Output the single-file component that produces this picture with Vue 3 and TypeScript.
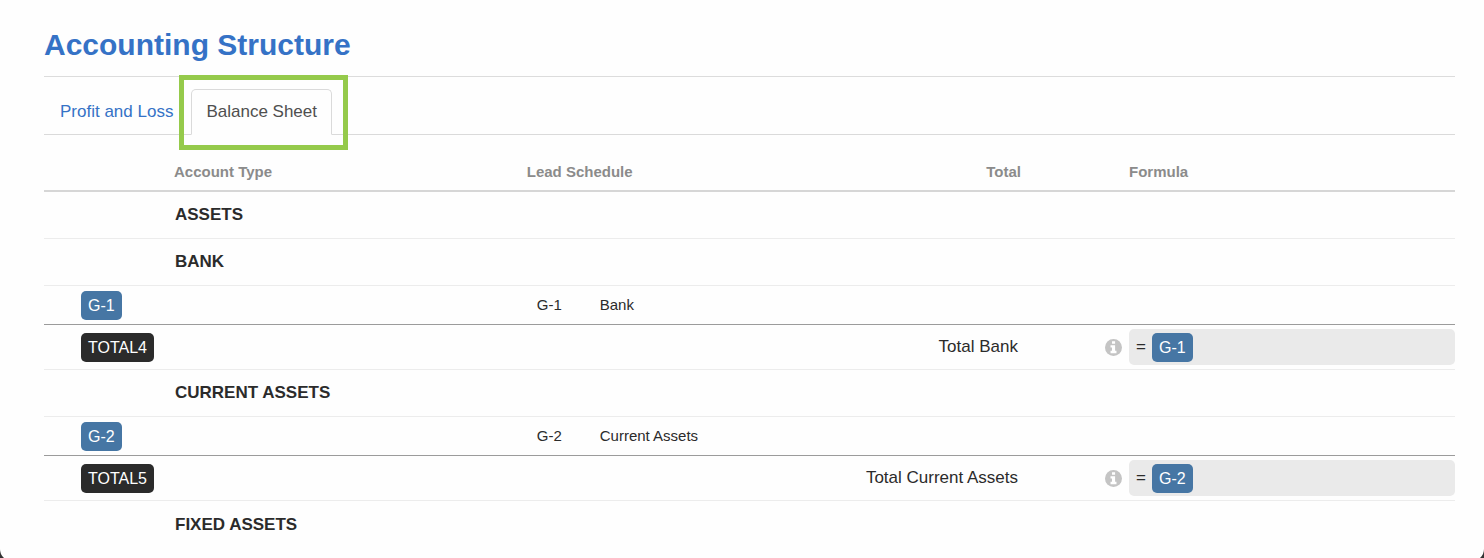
<script setup lang="ts">
import { ref } from 'vue'

interface SectionRow { kind: 'section'; title: string }
interface AccountRow { kind: 'account'; code: string; name: string }
interface TotalRow { kind: 'total'; code: string; label: string; formula: string[] }
type Row = SectionRow | AccountRow | TotalRow

const tabs: string[] = ['Profit and Loss', 'Balance Sheet']
const activeTab = ref<string>('Balance Sheet')

const rows: Row[] = [
  { kind: 'section', title: 'ASSETS' },
  { kind: 'section', title: 'BANK' },
  { kind: 'account', code: 'G-1', name: 'Bank' },
  { kind: 'total', code: 'TOTAL4', label: 'Total Bank', formula: ['G-1'] },
  { kind: 'section', title: 'CURRENT ASSETS' },
  { kind: 'account', code: 'G-2', name: 'Current Assets' },
  { kind: 'total', code: 'TOTAL5', label: 'Total Current Assets', formula: ['G-2'] },
  { kind: 'section', title: 'FIXED ASSETS' },
]
</script>

<template>
  <div class="window">
    <main class="page">
      <h1 class="title">Accounting Structure</h1>

      <nav class="tabs">
        <a
          v-for="tab in tabs"
          :key="tab"
          href="#"
          class="tab"
          :class="{ active: tab === activeTab }"
          @click.prevent="activeTab = tab"
        >{{ tab }}<span v-if="tab === activeTab" class="highlight"></span></a>
      </nav>

      <table class="structure">
        <colgroup>
          <col class="col-code" />
          <col class="col-type" />
          <col />
          <col />
          <col class="col-info" />
          <col class="col-formula" />
        </colgroup>
        <thead>
          <tr>
            <th></th>
            <th>Account Type</th>
            <th>Lead Schedule</th>
            <th class="right">Total</th>
            <th></th>
            <th>Formula</th>
          </tr>
        </thead>
        <tbody>
          <tr v-for="(row, i) in rows" :key="i" :class="row.kind">
            <template v-if="row.kind === 'section'">
              <td></td>
              <td class="heading" colspan="5">{{ row.title }}</td>
            </template>
            <template v-else-if="row.kind === 'account'">
              <td class="code"><span class="badge blue">{{ row.code }}</span></td>
              <td></td>
              <td colspan="4">
                <div class="lead"><span class="lead-code">{{ row.code }}</span><span>{{ row.name }}</span></div>
              </td>
            </template>
            <template v-else>
              <td class="code"><span class="badge dark">{{ row.code }}</span></td>
              <td></td>
              <td class="total-label" colspan="2">{{ row.label }}</td>
              <td class="info-cell">
                <button type="button" class="info" :aria-label="`About ${row.label}`">
                  <svg viewBox="0 0 16 16" width="17" height="17" aria-hidden="true">
                    <circle cx="8" cy="8" r="8" fill="#c4c4c4" />
                    <path d="M6.6 2.2h2.9v2.3H6.6zM5.2 5.8h4.3v5.3h1.3v2.2H5.2v-2.2h1.4V8H5.2z" fill="#fff" />
                  </svg>
                </button>
              </td>
              <td>
                <div class="formula">
                  <span>=</span>
                  <span v-for="part in row.formula" :key="part" class="badge blue">{{ part }}</span>
                </div>
              </td>
            </template>
          </tr>
        </tbody>
      </table>
    </main>
  </div>
</template>

<style>
body {
  margin: 0;
  background: #333;
}
</style>

<style scoped>
.window {
  height: 100vh;
  overflow: hidden;
  background: #333;
  font-family: "Liberation Sans", Arial, sans-serif;
  color: #2b2b2b;
}
.page {
  box-sizing: border-box;
  min-height: calc(100vh + 3px);
  padding: 27px 29px 0 44px;
  background: #fefefe;
  border-radius: 0 0 12px 12px;
}
.title {
  margin: 0;
  padding-bottom: 13px;
  border-bottom: 1px solid #dcdcdc;
  font-size: 30px;
  line-height: 36px;
  font-weight: bold;
  color: #3572c6;
}
.tabs {
  display: flex;
  gap: 3px;
  margin-top: 12px;
  padding-left: 1px;
  border-bottom: 1px solid #dadada;
}
.tab {
  position: relative;
  margin-bottom: -1px;
  padding: 12px 14px;
  border: 1px solid transparent;
  border-radius: 5px 5px 0 0;
  font-size: 17px;
  line-height: 20px;
  color: #3572c6;
  text-decoration: none;
}
.tab.active {
  border-color: #dadada;
  border-bottom-color: #fefefe;
  background: #fefefe;
  color: #4f4f4f;
}
.highlight {
  position: absolute;
  inset: -15px -17px -16px -13px;
  border: 5px solid #95ca4b;
  pointer-events: none;
}
.structure {
  width: 100%;
  table-layout: fixed;
  border-collapse: separate;
  border-spacing: 0;
}
.col-code {
  width: 130px;
}
.col-type {
  width: 25%;
}
.col-info {
  width: 108px;
}
.col-formula {
  width: 326px;
}
th {
  padding: 27px 0 8px;
  border-bottom: 2px solid #d6d6d6;
  font-size: 15px;
  line-height: 20px;
  text-align: left;
  color: #8b8b8b;
}
th.right {
  text-align: right;
}
td {
  box-sizing: border-box;
  padding: 0;
  border-bottom: 1px solid #ececec;
  font-size: 17px;
  line-height: 20px;
  vertical-align: middle;
}
.section td {
  height: 47px;
}
.account td {
  height: 39px;
  border-bottom-color: #9b9b9b;
}
.total td {
  height: 45px;
}
.section:last-child td {
  border-bottom: 0;
}
.structure .heading {
  padding-left: 1px;
  font-weight: bold;
}
.structure .code {
  padding-left: 37px;
}
.badge {
  display: block;
  width: fit-content;
  padding: 0 7px;
  border-radius: 5px;
  font-size: 16px;
  line-height: 29px;
  color: #fff;
}
.blue {
  background: #4676a4;
}
.dark {
  background: #2b2b2b;
}
.lead {
  display: flex;
  padding-left: 10px;
  font-size: 15px;
}
.lead-code {
  width: 63px;
}
.structure .total-label {
  padding-right: 3px;
  text-align: right;
}
.structure .info-cell {
  padding-right: 7px;
}
.info {
  display: block;
  margin-left: auto;
  padding: 0;
  border: 0;
  background: none;
  cursor: pointer;
}
.info svg {
  display: block;
}
.formula {
  display: flex;
  align-items: center;
  gap: 6px;
  height: 36px;
  padding-left: 7px;
  border-radius: 5px;
  background: #eaeaea;
  font-size: 17px;
}
</style>
